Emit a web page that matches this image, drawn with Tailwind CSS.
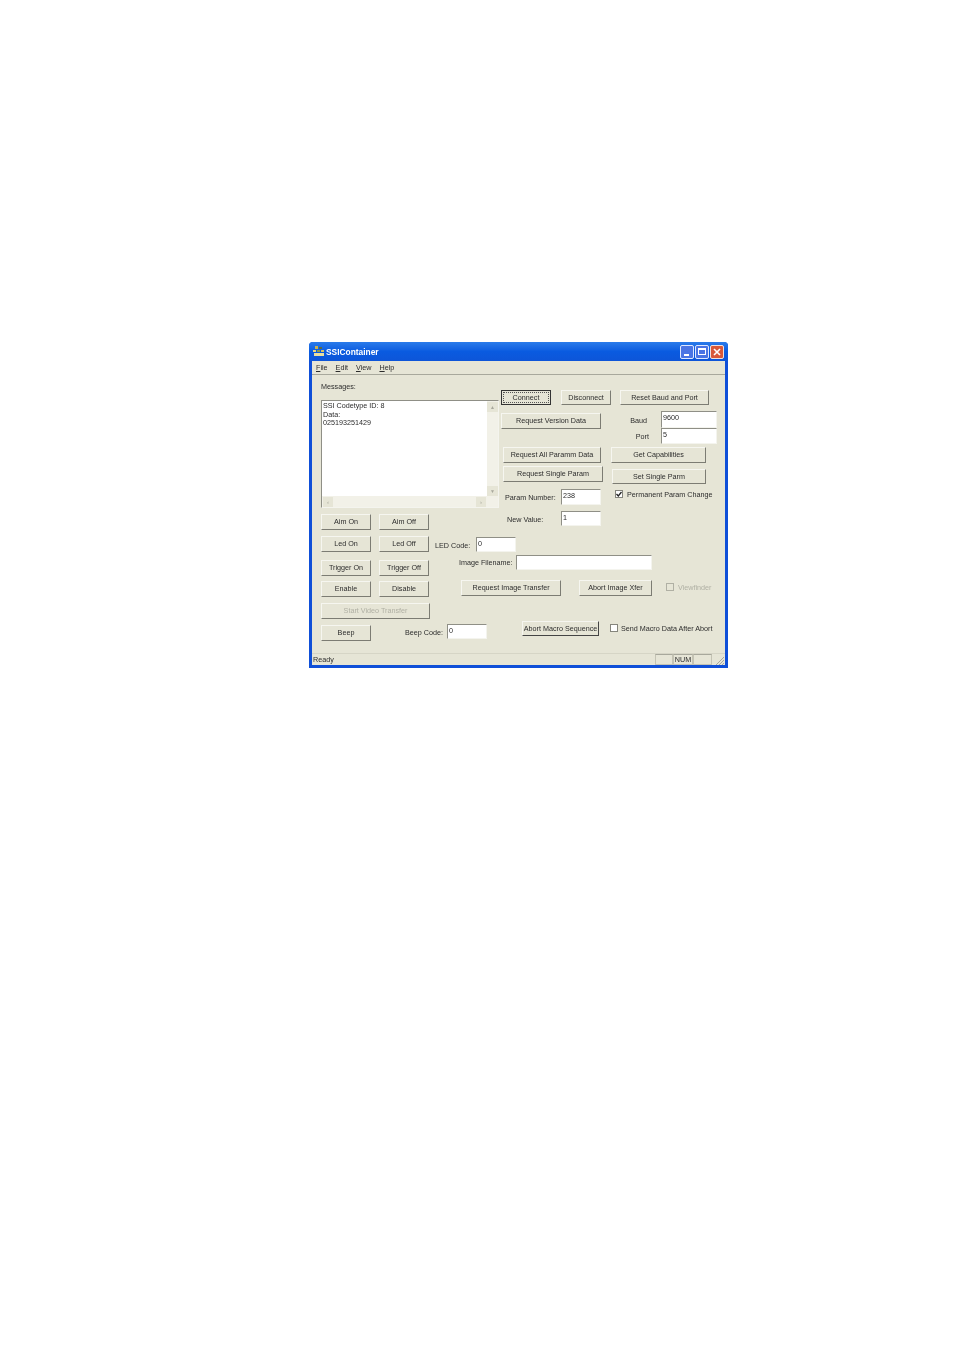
<!DOCTYPE html>
<html lang="en">
<head>
<meta charset="UTF-8">
<title>SSIContainer</title>
<script src="https://cdn.jsdelivr.net/npm/@tailwindcss/browser@4"></script>
</head>
<body class="bg-white">
<div class="w-[954px] h-[1351px] pt-[342px] pl-[309px] bg-white font-['Liberation_Sans',sans-serif] text-[7.2px] leading-[10px] text-[#2c2c2c] whitespace-nowrap">
  <!-- window -->
  <div class="w-[419px] h-[326px] flex flex-col bg-[#0f4fd8] rounded-t-[4px] px-[3px] pb-[3px] blur-[0.35px]">
    <!-- title bar -->
    <div class="h-[19px] -mx-[3px] px-[4px] rounded-t-[4px] flex items-center bg-gradient-to-b from-[#2a7bea] via-[#0a5be0] to-[#0d55d8]">
      <svg class="w-[12px] h-[11px]" viewBox="0 0 12 11"><rect x="2" y="0" width="3" height="3" fill="#c8b050"/><rect x="6" y="1" width="3" height="2" fill="#5a6a40"/><rect x="0" y="4" width="3" height="2" fill="#e8d880"/><rect x="4" y="4" width="3" height="2" fill="#8a9a50"/><rect x="8" y="4" width="3" height="2" fill="#d8c060"/><rect x="1" y="7" width="10" height="3" fill="#e8dfa0"/></svg>
      <span class="ml-[1px] text-white font-bold text-[8.4px]">SSIContainer</span>
      <div class="ml-auto flex gap-[1px]">
        <div class="w-[14px] h-[14px] rounded-[2px] border border-[#dfe8ff] bg-[#4a74e4] flex items-end pl-[3px] pb-[2px]"><div class="w-[5px] h-[2px] bg-white"></div></div>
        <div class="w-[14px] h-[14px] rounded-[2px] border border-[#dfe8ff] bg-[#4a74e4] flex items-center justify-center"><div class="w-[8px] h-[7px] border border-white border-t-2"></div></div>
        <div class="w-[14px] h-[14px] rounded-[2px] border border-[#f0e0dc] bg-[#d8583a] flex items-center justify-center">
          <svg class="w-[8px] h-[8px]" viewBox="0 0 8 8"><path d="M1 1L7 7M7 1L1 7" stroke="#fff" stroke-width="1.6"/></svg>
        </div>
      </div>
    </div>
    <!-- body -->
    <div class="flex-1 flex flex-col bg-[#e6e5d6]">
      <!-- menu -->
      <div class="h-[14px] flex items-center pl-[4px] gap-[8px] border-b border-[#a8a89c] shrink-0">
        <span><u>F</u>ile</span><span><u>E</u>dit</span><span><u>V</u>iew</span><span><u>H</u>elp</span>
      </div>
      <!-- dialog -->
      <div class="flex-1 flex flex-col pl-[9px] pt-[2px]">
        <div class="flex h-[244px]">
          <!-- left column -->
          <div class="w-[114px] shrink-0 flex flex-col">
            <div class="pt-[5px] h-[23px]">Messages:</div>
            <div class="w-[178px] h-[108px] flex bg-white border border-[#8f8f86] border-r-[#f4f4ee] border-b-[#f4f4ee] relative z-10">
              <div class="flex-1 flex flex-col">
                <div class="flex-1 pl-[1px] pt-[1px] leading-[8.5px]">SSI Codetype ID: 8<br>Data:<br>025193251429</div>
                <div class="h-[11px] flex bg-[#f2f1e8] items-center justify-between px-[1px]">
                  <div class="w-[10px] h-[10px] bg-[#e6e5d6] flex items-center justify-center text-[6px] leading-none text-[#a8a89c]">‹</div>
                  <div class="w-[10px] h-[10px] bg-[#e6e5d6] flex items-center justify-center text-[6px] leading-none text-[#a8a89c]">›</div>
                </div>
              </div>
              <div class="w-[11px] flex flex-col justify-between bg-[#f2f1e8] py-[1px] pb-[11px]">
                <div class="h-[10px] bg-[#e6e5d6] flex items-center justify-center text-[5px] leading-none text-[#a8a89c]">▲</div>
                <div class="h-[10px] bg-[#e6e5d6] flex items-center justify-center text-[5px] leading-none text-[#a8a89c]">▼</div>
              </div>
            </div>
            <div class="grid grid-cols-[50px_50px] gap-x-[8px] mt-[6px]">
              <button class="h-[16px] bg-[#e6e5d6] border border-[#f6f6f0] border-r-[#7c7c73] border-b-[#7c7c73]">Aim On</button>
              <button class="h-[16px] bg-[#e6e5d6] border border-[#f6f6f0] border-r-[#7c7c73] border-b-[#7c7c73]">Aim Off</button>
              <button class="h-[16px] mt-[6px] bg-[#e6e5d6] border border-[#f6f6f0] border-r-[#7c7c73] border-b-[#7c7c73]">Led On</button>
              <button class="h-[16px] mt-[6px] bg-[#e6e5d6] border border-[#f6f6f0] border-r-[#7c7c73] border-b-[#7c7c73]">Led Off</button>
              <button class="h-[16px] mt-[8px] bg-[#e6e5d6] border border-[#f6f6f0] border-r-[#7c7c73] border-b-[#7c7c73]">Trigger On</button>
              <button class="h-[16px] mt-[8px] bg-[#e6e5d6] border border-[#f6f6f0] border-r-[#7c7c73] border-b-[#7c7c73]">Trigger Off</button>
              <button class="h-[16px] mt-[5px] bg-[#e6e5d6] border border-[#f6f6f0] border-r-[#7c7c73] border-b-[#7c7c73]">Enable</button>
              <button class="h-[16px] mt-[5px] bg-[#e6e5d6] border border-[#f6f6f0] border-r-[#7c7c73] border-b-[#7c7c73]">Disable</button>
            </div>
            <button class="w-[109px] h-[16px] mt-[6px] bg-[#e6e5d6] border border-[#f6f6f0] border-r-[#7c7c73] border-b-[#7c7c73] text-[#b0b0a4]">Start Video Transfer</button>
          </div>
          <!-- right column, starts at x=435 -->
          <div class="flex-1 flex flex-col pt-[13px]">
            <div class="h-[21px] flex items-start pl-[66px]">
              <button class="w-[50px] h-[15px] bg-[#e6e5d6] border border-[#333] p-[1px]"><span class="flex w-full h-full items-center justify-center border border-dotted border-[#555]">Connect</span></button>
              <button class="w-[50px] h-[15px] ml-[10px] bg-[#e6e5d6] border border-[#f6f6f0] border-r-[#7c7c73] border-b-[#7c7c73]">Disconnect</button>
              <button class="w-[89px] h-[15px] ml-[9px] bg-[#e6e5d6] border border-[#f6f6f0] border-r-[#7c7c73] border-b-[#7c7c73]">Reset Baud and Port</button>
            </div>
            <div class="h-[36px] flex items-start pl-[66px]">
              <button class="w-[100px] h-[16px] mt-[2px] bg-[#e6e5d6] border border-[#f6f6f0] border-r-[#7c7c73] border-b-[#7c7c73]">Request Version Data</button>
              <div class="flex flex-col">
                <div class="h-[17px] flex items-start">
                  <span class="w-[46px] pt-[5px] text-right">Baud</span>
                  <div class="w-[56px] h-[17px] ml-[14px] bg-white border border-[#8f8f86] border-r-[#f4f4ee] border-b-[#f4f4ee] pl-[1px] pt-[1px]">9600</div>
                </div>
                <div class="h-[16px] flex items-start">
                  <span class="w-[48px] pt-[4px] text-right">Port</span>
                  <div class="w-[56px] h-[16px] ml-[12px] bg-white border border-[#8f8f86] border-r-[#f4f4ee] border-b-[#f4f4ee] pl-[1px] pt-[1px]">5</div>
                </div>
              </div>
            </div>
            <div class="h-[19px] flex items-start pl-[68px]">
              <button class="w-[98px] h-[16px] bg-[#e6e5d6] border border-[#f6f6f0] border-r-[#7c7c73] border-b-[#7c7c73]">Request All Paramm Data</button>
              <button class="w-[95px] h-[16px] ml-[10px] bg-[#e6e5d6] border border-[#f6f6f0] border-r-[#7c7c73] border-b-[#7c7c73]">Get Capabilities</button>
            </div>
            <div class="h-[23px] flex items-start pl-[68px]">
              <button class="w-[100px] h-[16px] bg-[#e6e5d6] border border-[#f6f6f0] border-r-[#7c7c73] border-b-[#7c7c73]">Request Single Param</button>
              <button class="w-[94px] h-[15px] mt-[3px] ml-[9px] bg-[#e6e5d6] border border-[#f6f6f0] border-r-[#7c7c73] border-b-[#7c7c73]">Set Single Parm</button>
            </div>
            <div class="h-[22px] flex items-start pl-[70px]">
              <span class="w-[56px] pt-[4px]">Param Number:</span>
              <div class="w-[40px] h-[16px] bg-white border border-[#8f8f86] border-r-[#f4f4ee] border-b-[#f4f4ee] pl-[1px] pt-[1px]">238</div>
              <div class="w-[8px] h-[8px] ml-[14px] mt-[1px] bg-white border border-[#85857c] flex items-center justify-center">
                <svg class="w-[6px] h-[6px]" viewBox="0 0 6 6"><path d="M0.5 3L2.3 5L5.5 1" fill="none" stroke="#222" stroke-width="1.3"/></svg>
              </div>
              <span class="ml-[4px] mt-[1px]">Permanent Param Change</span>
            </div>
            <div class="h-[26px] flex items-start pl-[72px]">
              <span class="w-[54px] pt-[4px]">New Value:</span>
              <div class="w-[40px] h-[15px] bg-white border border-[#8f8f86] border-r-[#f4f4ee] border-b-[#f4f4ee] pl-[1px] pt-[1px]">1</div>
            </div>
            <div class="h-[18px] flex items-start">
              <span class="w-[41px] pt-[4px]">LED Code:</span>
              <div class="w-[40px] h-[15px] bg-white border border-[#8f8f86] border-r-[#f4f4ee] border-b-[#f4f4ee] pl-[1px] pt-[1px]">0</div>
            </div>
            <div class="h-[25px] flex items-start pl-[24px]">
              <span class="w-[57px] pt-[3px]">Image Filename:</span>
              <div class="w-[136px] h-[15px] bg-white border border-[#8f8f86] border-r-[#f4f4ee] border-b-[#f4f4ee]"></div>
            </div>
            <div class="flex items-start pl-[26px]">
              <button class="w-[100px] h-[16px] bg-[#e6e5d6] border border-[#f6f6f0] border-r-[#7c7c73] border-b-[#7c7c73]">Request Image Transfer</button>
              <button class="w-[73px] h-[16px] ml-[18px] bg-[#e6e5d6] border border-[#f6f6f0] border-r-[#7c7c73] border-b-[#7c7c73]">Abort Image Xfer</button>
              <div class="w-[8px] h-[8px] ml-[14px] mt-[3px] bg-[#e6e5d6] border border-[#b0b0a4]"></div>
              <span class="ml-[4px] mt-[3px] text-[#b0b0a4]">Viewfinder</span>
            </div>
          </div>
        </div>
        <!-- bottom row -->
        <div class="h-[32px] flex items-start">
          <button class="w-[50px] h-[16px] mt-[4px] bg-[#e6e5d6] border border-[#f6f6f0] border-r-[#7c7c73] border-b-[#7c7c73]">Beep</button>
          <span class="w-[42px] ml-[34px] mt-[7px]">Beep Code:</span>
          <div class="w-[40px] h-[15px] mt-[3px] bg-white border border-[#8f8f86] border-r-[#f4f4ee] border-b-[#f4f4ee] pl-[1px] pt-[1px]">0</div>
          <button class="w-[77px] h-[15px] ml-[35px] bg-[#e6e5d6] border border-[#f6f6f0] border-r-[#444] border-b-[#444]">Abort Macro Sequence</button>
          <div class="w-[8px] h-[8px] ml-[11px] mt-[3px] bg-white border border-[#85857c]"></div>
          <span class="ml-[3px] mt-[3px]">Send Macro Data After Abort</span>
        </div>
      </div>
      <!-- status bar -->
      <div class="h-[12px] shrink-0 flex items-center pl-[1px] border-t border-[#d6d5c6]">
        <span>Ready</span>
        <div class="ml-auto flex h-full items-stretch">
          <div class="w-[18px] border border-[#c4c3b4] border-t-[#a8a89c]"></div>
          <div class="w-[20px] border border-[#c4c3b4] border-t-[#a8a89c] text-center">NUM</div>
          <div class="w-[19px] border border-[#c4c3b4] border-t-[#a8a89c]"></div>
          <svg class="w-[13px] h-[12px]" viewBox="0 0 13 12"><path d="M12 3L4 11M12 6L7 11M12 9L10 11" stroke="#a8a89c" stroke-width="1"/></svg>
        </div>
      </div>
    </div>
  </div>
</div>
</body>
</html>
